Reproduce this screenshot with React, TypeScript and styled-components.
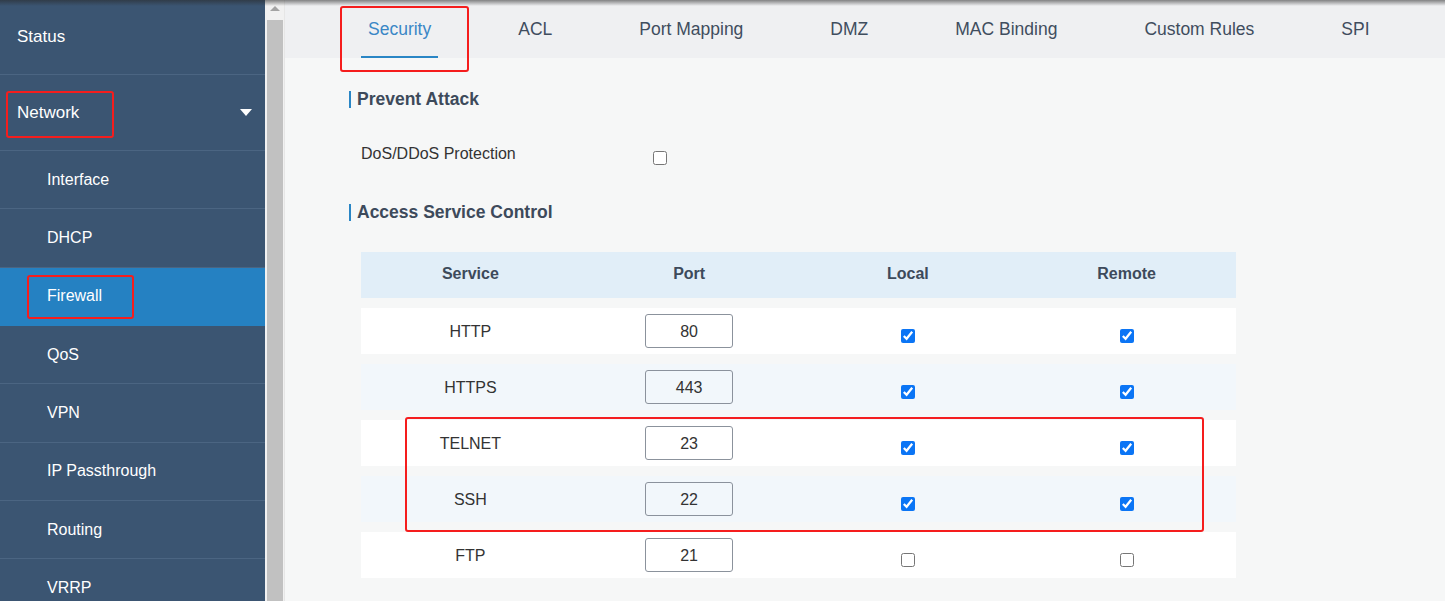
import React from "react";
import styled, { createGlobalStyle } from "styled-components";

const GlobalStyle = createGlobalStyle`
  html, body { margin: 0; padding: 0; }
  body { font-family: "Liberation Sans", Arial, sans-serif; background: #f6f7f7; }
  * { box-sizing: border-box; }
`;

const Page = styled.div`
  position: relative;
  width: 1445px;
  height: 601px;
  overflow: hidden;
  display: flex;
  background: #f6f7f7;
`;

const TopShade = styled.div`
  position: absolute;
  left: 0;
  top: 0;
  right: 0;
  height: 6px;
  background: linear-gradient(to bottom, rgba(40, 40, 40, 0.55), rgba(40, 40, 40, 0));
  pointer-events: none;
`;

const Sidebar = styled.nav`
  width: 265px;
  flex: none;
  background: #3b5572;
  display: flex;
  flex-direction: column;
`;

const TopItem = styled.div<{ $h: number }>`
  height: ${(p) => p.$h}px;
  flex: none;
  display: flex;
  align-items: center;
  justify-content: space-between;
  padding: 0 13px 0 17px;
  border-bottom: 1px solid #4b6582;
  color: #fff;
  font-size: 17px;
`;

const Caret = styled.span`
  width: 0;
  height: 0;
  border-left: 6px solid transparent;
  border-right: 6px solid transparent;
  border-top: 7px solid #fff;
`;

const SubItem = styled.div<{ $active?: boolean }>`
  height: 58.34px;
  flex: none;
  display: flex;
  align-items: center;
  padding-left: 47px;
  border-bottom: 1px solid ${(p) => (p.$active ? "#2581c2" : "#4b6582")};
  background: ${(p) => (p.$active ? "#2581c2" : "transparent")};
  color: #fff;
  font-size: 16px;
`;

const ScrollTrack = styled.div`
  width: 20px;
  flex: none;
  background: #f1f1f1;
  display: flex;
  flex-direction: column;
  align-items: center;
  padding: 0 1px 0 2px;
  border-right: 1px solid #e6e6e6;
`;

const ScrollArrow = styled.div`
  height: 20px;
  width: 100%;
  display: flex;
  align-items: center;
  justify-content: center;
  &::before {
    content: "";
    border-left: 5px solid transparent;
    border-right: 5px solid transparent;
    border-bottom: 5px solid #a3a3a3;
    margin-top: -4px;
  }
`;

const ScrollThumb = styled.div`
  flex: 1;
  width: 100%;
  background: #c1c1c1;
`;

const Main = styled.main`
  flex: 1;
  display: flex;
  flex-direction: column;
  background: #f6f7f7;
`;

const TabBar = styled.div`
  height: 58px;
  flex: none;
  background: #eff0f2;
  display: flex;
  align-items: stretch;
  padding-left: 76px;
  gap: 73px;
`;

const Tab = styled.div<{ $active?: boolean }>`
  display: flex;
  align-items: center;
  padding: 2px 7px 0;
  font-size: 17.5px;
  color: ${(p) => (p.$active ? "#3a87c6" : "#3f4d5e")};
  border-bottom: 2px solid ${(p) => (p.$active ? "#2a86c5" : "transparent")};
`;

const Content = styled.div`
  padding-left: 64px;
  display: flex;
  flex-direction: column;
`;

const SectionTitle = styled.h2<{ $mt: number }>`
  margin: ${(p) => p.$mt}px 0 0 0;
  height: 20px;
  display: flex;
  align-items: center;
  font-size: 17.5px;
  font-weight: bold;
  color: #3d4a5b;
  padding-left: 8px;
  position: relative;
  &::before {
    content: "";
    position: absolute;
    left: 0;
    top: 2px;
    width: 2px;
    height: 17px;
    background: #2a86c5;
  }
`;

const FieldRow = styled.div`
  margin: 30px 0 0 12px;
  height: 30px;
  display: flex;
  align-items: center;
`;

const FieldLabel = styled.span`
  width: 292px;
  font-size: 16px;
  color: #333;
`;

const Check = styled.input.attrs({ type: "checkbox" })`
  width: 14px;
  height: 14px;
  margin: 7px 0 0 0;
  accent-color: #0b75f5;
`;

const Table = styled.div`
  margin: 30px 0 0 12px;
  width: 875px;
  display: flex;
  flex-direction: column;
  gap: 10px;
`;

const TRow = styled.div<{ $kind: "head" | "odd" | "even" }>`
  height: 46px;
  display: grid;
  grid-template-columns: repeat(4, 1fr);
  align-items: center;
  justify-items: center;
  background: ${(p) =>
    p.$kind === "head" ? "#e1eef8" : p.$kind === "odd" ? "#ffffff" : "#f2f7fb"};
  font-size: 16px;
  font-weight: ${(p) => (p.$kind === "head" ? "bold" : "normal")};
  color: ${(p) => (p.$kind === "head" ? "#3d4a5b" : "#333")};
  padding-top: ${(p) => (p.$kind === "head" ? "0" : "2px")};
  padding-bottom: ${(p) => (p.$kind === "head" ? "2px" : "0")};
`;

const PortInput = styled.input`
  width: 88px;
  height: 34px;
  margin-top: -2px;
  border: 1px solid #8b929c;
  border-radius: 3px;
  background: transparent;
  text-align: center;
  font-family: "Liberation Sans", Arial, sans-serif;
  font-size: 16px;
  color: #333;
  padding: 2px 0 0;
`;

const Mark = styled.div`
  position: absolute;
  border: 2px solid #f51d1d;
  border-radius: 3px;
  pointer-events: none;
`;

const rows = [
  { name: "HTTP", port: "80", local: true, remote: true },
  { name: "HTTPS", port: "443", local: true, remote: true },
  { name: "TELNET", port: "23", local: true, remote: true },
  { name: "SSH", port: "22", local: true, remote: true },
  { name: "FTP", port: "21", local: false, remote: false },
];

const subs = ["Interface", "DHCP", "Firewall", "QoS", "VPN", "IP Passthrough", "Routing", "VRRP"];
const tabs = ["Security", "ACL", "Port Mapping", "DMZ", "MAC Binding", "Custom Rules", "SPI"];

export default function App() {
  return (
    <>
      <GlobalStyle />
      <Page>
        <Sidebar>
          <TopItem $h={75}>Status</TopItem>
          <TopItem $h={76}>
            Network
            <Caret />
          </TopItem>
          {subs.map((s) => (
            <SubItem key={s} $active={s === "Firewall"}>
              {s}
            </SubItem>
          ))}
        </Sidebar>
        <ScrollTrack>
          <ScrollArrow />
          <ScrollThumb />
        </ScrollTrack>
        <Main>
          <TabBar>
            {tabs.map((t) => (
              <Tab key={t} $active={t === "Security"}>
                {t}
              </Tab>
            ))}
          </TabBar>
          <Content>
            <SectionTitle $mt={31}>Prevent Attack</SectionTitle>
            <FieldRow>
              <FieldLabel>DoS/DDoS Protection</FieldLabel>
              <Check defaultChecked={false} />
            </FieldRow>
            <SectionTitle $mt={33}>Access Service Control</SectionTitle>
            <Table>
              <TRow $kind="head">
                <span>Service</span>
                <span>Port</span>
                <span>Local</span>
                <span>Remote</span>
              </TRow>
              {rows.map((r, i) => (
                <TRow key={r.name} $kind={i % 2 === 0 ? "odd" : "even"}>
                  <span>{r.name}</span>
                  <PortInput defaultValue={r.port} />
                  <Check defaultChecked={r.local} />
                  <Check defaultChecked={r.remote} />
                </TRow>
              ))}
            </Table>
          </Content>
        </Main>
        <TopShade />
        <Mark style={{ left: 6, top: 91, width: 108, height: 47 }} />
        <Mark style={{ left: 27, top: 275, width: 107, height: 44 }} />
        <Mark style={{ left: 340, top: 6, width: 129, height: 66 }} />
        <Mark style={{ left: 405, top: 417, width: 799, height: 115 }} />
      </Page>
    </>
  );
}
